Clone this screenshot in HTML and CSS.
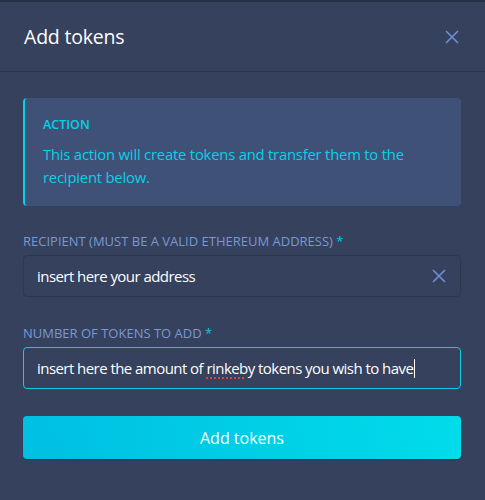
FILE: index.html
```html
<!DOCTYPE html>
<html>
<head>
<meta charset="utf-8">
<link rel="stylesheet" href="styles.css">
</head>
<body>
<div class="topbar"></div>
<div class="panel">
  <header class="header">
    <h1 class="title">Add tokens</h1>
    <svg class="close" width="14" height="14" viewBox="0 0 14 14"><path d="M1 1L13 13M13 1L1 13" stroke="#6f8fd6" stroke-width="1.6" fill="none"/></svg>
  </header>
  <div class="content">
    <div class="info">
      <div class="info-title">ACTION</div>
      <div class="info-text">This action will create tokens and transfer them to the recipient below.</div>
    </div>
    <label class="label">RECIPIENT (MUST BE A VALID ETHEREUM ADDRESS) <span class="req">*</span></label>
    <div class="field">
      <span class="value">insert here your address</span>
      <svg class="clear" width="14" height="14" viewBox="0 0 14 14"><path d="M1 1L13 13M13 1L1 13" stroke="#6f8fd6" stroke-width="1.6" fill="none"/></svg>
    </div>
    <label class="label">NUMBER OF TOKENS TO ADD <span class="req">*</span></label>
    <div class="field focus">
      <span class="value">insert here the amount of <span class="typo">rinkeby</span> tokens you wish to have</span><span class="caret"></span>
    </div>
    <button class="submit">Add tokens</button>
  </div>
</div>
</body>
</html>
```
FILE: styles.css
```css
* { box-sizing: border-box; }
html, body { margin: 0; padding: 0; }
body {
  background: #35415d;
  font-family: "Open Sans", "Noto Sans", sans-serif;
  width: 485px;
  height: 500px;
  overflow: hidden;
}
.topbar { height: 2px; background: #272f44; }
.header {
  height: 70px;
  display: flex;
  align-items: center;
  justify-content: space-between;
  padding: 0 26px 0 24px;
  border-bottom: 1px solid #2c364d;
}
.title {
  margin: 0;
  font-size: 19.5px;
  font-weight: 400;
  color: #ffffff;
  letter-spacing: -0.2px;
}
.close { display: block; }
.content {
  padding: 26px 24px 0 23px;
  display: flex;
  flex-direction: column;
}
.info {
  background: #3f5176;
  border-left: 2px solid #08d0ea;
  border-radius: 4px;
  padding: 19px 18px 14px 18px;
  height: 108px;
}
.info-title {
  color: #08d0ea;
  font-size: 12.5px;
  font-weight: 600;
  line-height: 16px;
}
.info-text {
  color: #08d0ea;
  font-size: 14.8px;
  line-height: 23px;
  margin-top: 10px;
  letter-spacing: -0.2px;
}
.label {
  margin-top: 26px;
  font-size: 13px;
  line-height: 18px;
  color: #7b98d2;
  letter-spacing: 0;
}
.req { color: #08c8e4; }
.field {
  margin-top: 5px;
  height: 42px;
  border: 1px solid #2d384f;
  border-radius: 4px;
  display: flex;
  align-items: center;
  justify-content: space-between;
  padding: 0 14px 0 13px;
  color: #ffffff;
  font-size: 15px;
  letter-spacing: -0.55px;
}
.field + .label { margin-top: 27px; }
.field.focus {
  border-color: #0ccde6;
  justify-content: flex-start;
}
.typo {
  text-decoration: underline dotted #e2403f;
  text-decoration-thickness: 2px;
  text-underline-offset: 3px;
}
.caret {
  display: inline-block;
  width: 1px;
  height: 19px;
  background: #ffffff;
  margin-left: 1px;
}
.submit {
  margin-top: 27px;
  height: 43px;
  border: none;
  border-radius: 4px;
  background: linear-gradient(80deg, #00bfe2 0%, #00dcea 100%);
  color: #ffffff;
  font-family: inherit;
  font-size: 16px;
  box-shadow: 0 1px 1px rgba(0,0,0,0.25);
}
```
